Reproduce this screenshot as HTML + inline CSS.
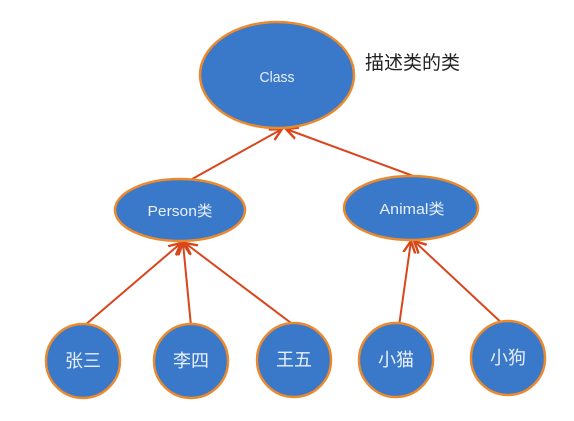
<!DOCTYPE html>
<html><head><meta charset="utf-8"><style>
html,body{margin:0;padding:0;background:#fff;width:574px;height:421px;overflow:hidden}
text{font-family:"Liberation Sans","Noto Sans CJK SC",sans-serif;fill:#e8f0fb}
</style></head><body>
<svg width="574" height="421" viewBox="0 0 574 421" xmlns="http://www.w3.org/2000/svg">
<defs><marker id="a" markerWidth="8" markerHeight="8" refX="6" refY="4" orient="auto"><path d="M0,1 L6,4 L0,7" fill="none" stroke="#d9461c" stroke-width="1.2"/></marker></defs>
<g stroke="#d9461c" stroke-width="2" fill="none">
<line x1="185" y1="183" x2="282" y2="129" marker-end="url(#a)"/>
<line x1="416" y1="177" x2="286" y2="129" marker-end="url(#a)"/>
<line x1="84" y1="326" x2="181" y2="243" marker-end="url(#a)"/>
<line x1="191" y1="326" x2="183" y2="243" marker-end="url(#a)"/>
<line x1="295" y1="326" x2="185" y2="243" marker-end="url(#a)"/>
<line x1="399" y1="326" x2="411" y2="241" marker-end="url(#a)"/>
<line x1="505" y1="326" x2="414" y2="241" marker-end="url(#a)"/>
</g>
<g fill="#3a78c9" stroke="#ea8a2e" stroke-width="2.5">
<ellipse cx="277" cy="75" rx="77" ry="53"/>
<ellipse cx="180" cy="210" rx="65" ry="31"/>
<ellipse cx="411" cy="208" rx="67" ry="32"/>
<circle cx="83" cy="361" r="37"/>
<circle cx="191" cy="361" r="37"/>
<circle cx="294" cy="360" r="37"/>
<circle cx="396" cy="360" r="37"/>
<circle cx="508" cy="358" r="37"/>
</g>
<g font-size="15" text-anchor="middle">
<text x="277" y="82" textLength="35" lengthAdjust="spacingAndGlyphs">Class</text>
<text x="180" y="216" textLength="65" lengthAdjust="spacingAndGlyphs">Person类</text>
<text x="412" y="214" textLength="65" lengthAdjust="spacingAndGlyphs">Animal类</text>
<text x="83" y="367" font-size="18">张三</text>
<text x="191" y="367" font-size="18">李四</text>
<text x="294" y="366" font-size="18">王五</text>
<text x="396" y="366" font-size="18">小猫</text>
<text x="508" y="364" font-size="18">小狗</text>
</g>
<text x="365" y="69" font-size="19" style="fill:#222">描述类的类</text>
</svg>
</body></html>
